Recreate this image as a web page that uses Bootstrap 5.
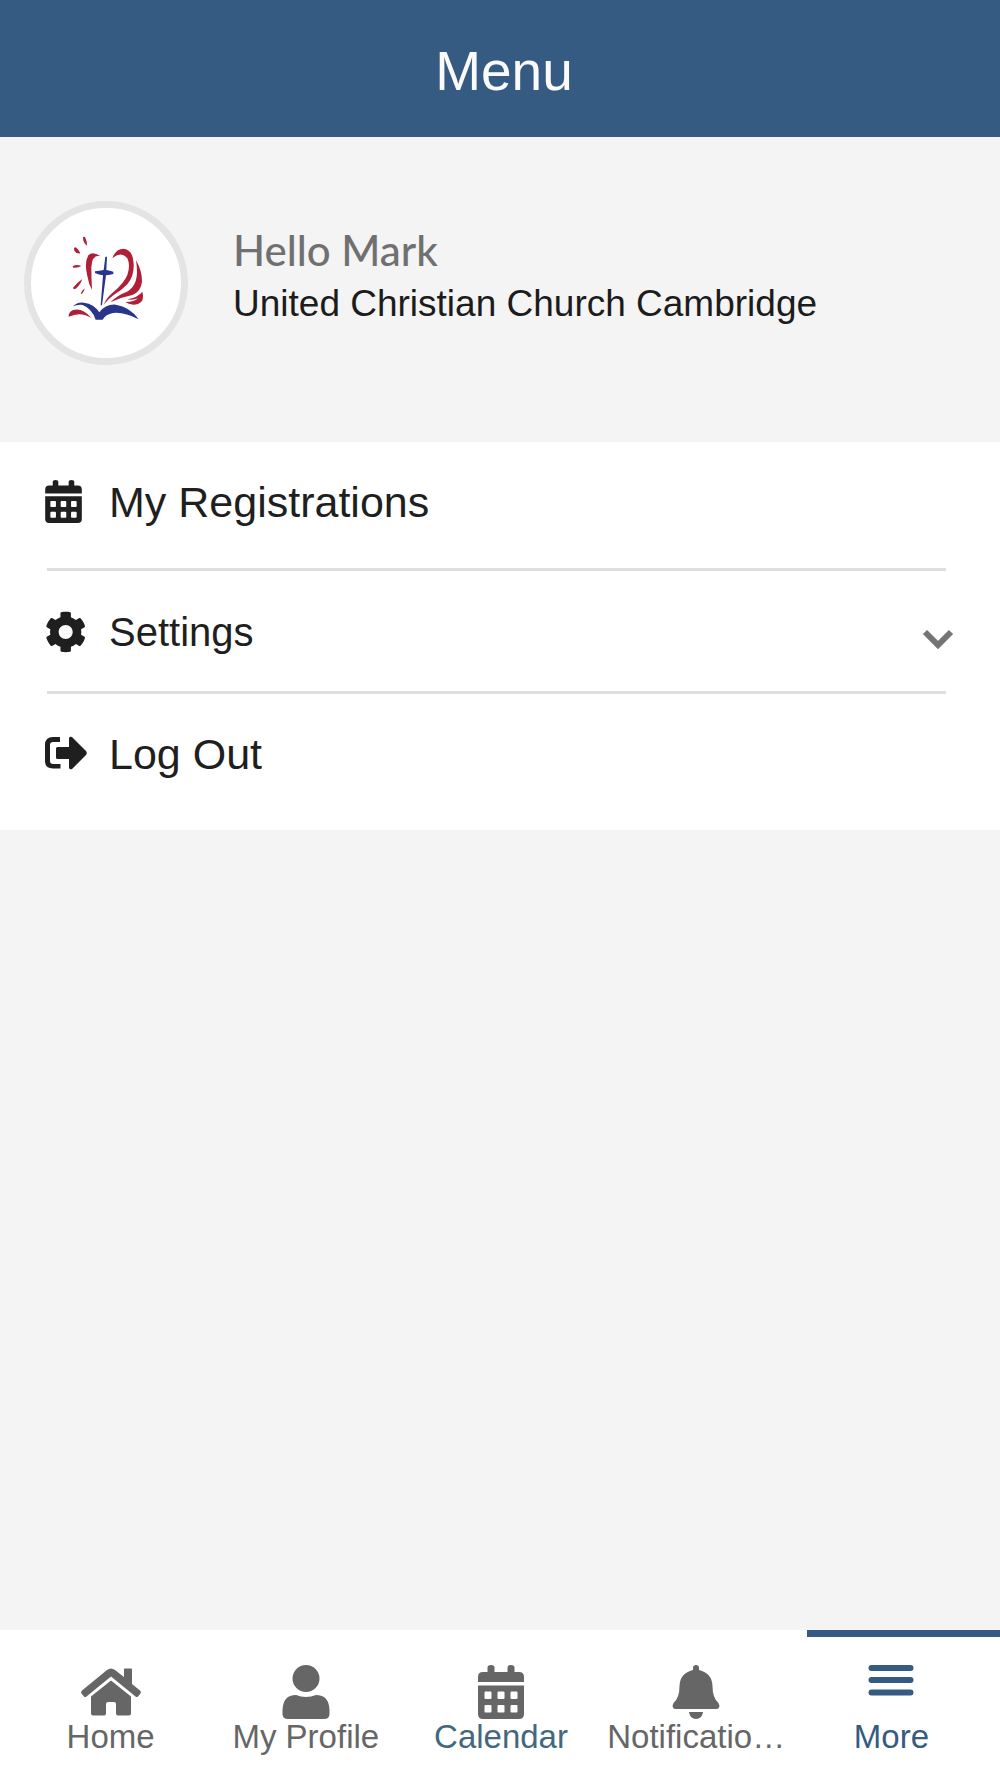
<!DOCTYPE html>
<html lang="en">
<head>
<meta charset="utf-8">
<meta name="viewport" content="width=device-width, initial-scale=1">
<title>Menu</title>
<link href="https://cdn.jsdelivr.net/npm/bootstrap@5.3.0/dist/css/bootstrap.min.css" rel="stylesheet">
<style>
  body { font-family: "Liberation Sans", Arial, sans-serif; background: #f4f4f4; color: #1c1c1c; }
  .app-header { background: #365b82; color: #fafafa; min-height: 137px; padding: 4px 0 0 8px; }
  .app-title { font-size: 55px; line-height: 64px; }
  .profile { padding: 64px 24px 77px; gap: 45px; }
  .avatar { width: 164px; height: 164px; border: 7px solid #e4e4e4; }
  .profile-text { line-height: 54px; padding-bottom: 12px; }
  .greeting { font-family: Lato, sans-serif; font-size: 42px; font-weight: 500; color: #707070; }
  .church { font-size: 37px; }
  .menu-list { padding-bottom: 16px; }
  .menu-item { min-height: 120px; padding: 0 46px 0 44px; gap: 21px; font-size: 43px; line-height: 48px; color: #1f1f1f; }
  .menu-item-sub { font-size: 40px; padding-top: 2px; }
  .menu-icon { width: 44px; height: 44px; }
  .divider { margin: 0 54px 0 47px; height: 3px; background: #dedede; opacity: 1; border: 0; }
  .divider-spaced { margin-top: 6px; }
  .chevron { width: 32px; height: 36px; }
  .tab-bar { padding: 0 11px 0 13px; }
  .tab { flex: 1 1 0; min-width: 0; padding: 35px 0 23px; font-size: 33px; line-height: 36px; color: #666; }
  .tab svg { width: 60px; height: 54px; }
  .tab-calendar { color: #43687c; }
  .tab-calendar svg { color: #666; }
  .tab-active { color: #365b82; }
  .tab-active::before { content: ""; position: absolute; top: 0; left: 13px; right: -11px; height: 7px; background: #365b82; }
</style>
<script src="https://cdn.jsdelivr.net/npm/bootstrap@5.3.0/dist/js/bootstrap.bundle.min.js" defer></script>
</head>
<body class="d-flex flex-column min-vh-100 overflow-x-hidden">

<svg class="d-none" xmlns="http://www.w3.org/2000/svg">
  <symbol id="calendar" viewBox="0 0 46 54">
    <path fill="currentColor" d="M9.500 7V2.500Q9.500 0 13 0T16.500 2.500V7H29.500V2.500Q29.500 0 33 0T36.500 2.500V7H41Q46 7 46 12V17H0V12Q0 7 5 7Z"/>
    <path fill="currentColor" fill-rule="evenodd" d="M0 20.500H46V49Q46 54 41 54H5Q0 54 0 49ZM7.500 26.500Q6.500 26.500 6.500 27.500V33Q6.500 34 7.500 34H12.500Q13.500 34 13.500 33V27.500Q13.500 26.500 12.500 26.500ZM20.500 26.500Q19.500 26.500 19.500 27.500V33Q19.500 34 20.500 34H25.500Q26.500 34 26.500 33V27.500Q26.500 26.500 25.500 26.500ZM33.500 26.500Q32.500 26.500 32.500 27.500V33Q32.500 34 33.500 34H38.500Q39.500 34 39.500 33V27.500Q39.500 26.500 38.500 26.500ZM7.500 40Q6.500 40 6.500 41V46.500Q6.500 47.500 7.500 47.500H12.500Q13.500 47.500 13.500 46.500V41Q13.500 40 12.500 40ZM20.500 40Q19.500 40 19.500 41V46.500Q19.500 47.500 20.500 47.500H25.500Q26.500 47.500 26.500 46.500V41Q26.500 40 25.500 40ZM33.500 40Q32.500 40 32.500 41V46.500Q32.500 47.500 33.500 47.500H38.500Q39.500 47.500 39.500 46.500V41Q39.500 40 38.500 40Z"/>
  </symbol>
</svg>

<header class="app-header d-flex align-items-center justify-content-center">
  <h1 class="app-title fw-normal m-0">Menu</h1>
</header>

<main class="flex-grow-1">
  <section class="profile d-flex align-items-center">
    <div class="avatar rounded-circle bg-white flex-shrink-0">
      <svg class="d-block w-100 h-100" viewBox="48 52 450 450" role="img" aria-label="Church logo">
        <g fill="#b01f38">
          <path d="M204 140Q208 136 211 141Q216 152 216 165Q209 162 205 149Z"/>
          <path d="M177 173Q180 168 184 171Q193 178 196 188Q184 190 178 180Z"/>
          <path d="M173 227Q184 220 199 226Q190 232 175 231Z"/>
          <path d="M202 265Q185 277 174 291Q175 298 182 294Q196 283 202 265Z"/>
          <path d="M209 293Q200 300 197 310Q204 312 209 293Z"/>
          <path d="M256 196Q232 181 220 194Q207 216 217 256Q221 280 231 298Q229 263 229 230Q231 191 256 196Z"/>
          <path d="M292 203Q302 174 326 174Q354 177 356 219Q358 257 337 281Q319 300 297 312Q282 322 266 342Q274 321 296 303Q326 279 337 253Q347 224 337 203Q318 180 292 203Z"/>
          <path d="M363 209Q381 239 381 273Q378 302 352 313Q317 320 286 335Q306 314 336 303Q356 292 363 268Q369 247 363 209Z"/>
          <path d="M382 303Q390 331 369 340Q349 346 331 334Q359 334 369 323Q355 329 337 326Q368 321 382 303Z"/>
          <path d="M161 378Q160 365 174 358Q203 350 229 382Q198 361 161 378Z"/>
        </g>
        <g fill="#29348c">
          <path d="M271 198H276L274 238Q285 240 295 243V250Q285 253 273 254L261 344H257L264 254Q252 252 240 247V242Q253 240 266 238Z"/>
          <path d="M174 347Q187 333 207 336Q237 340 253 365Q272 340 302 342Q345 348 371 386Q327 363 294 367Q272 371 263 387H242Q231 354 203 343Q188 341 174 347Z"/>
        </g>
      </svg>
    </div>
    <div class="profile-text">
      <div class="greeting">Hello Mark</div>
      <div class="church">United Christian Church Cambridge</div>
    </div>
  </section>

  <nav class="menu-list bg-white" aria-label="Account menu">
    <a href="#" class="menu-item d-flex align-items-center text-decoration-none">
      <svg class="menu-icon" viewBox="0 0 44 44" aria-hidden="true"><use href="#calendar" x="1" y="0" width="37" height="43"/></svg>
      <span>My Registrations</span>
    </a>
    <hr class="divider divider-spaced">
    <button type="button" class="menu-item menu-item-sub btn border-0 rounded-0 w-100 d-flex align-items-center text-start" aria-expanded="false">
      <svg class="menu-icon" viewBox="-10 -14 540 540" aria-hidden="true"><path fill="currentColor" d="M487.400 315.700l-42.600-24.600c4.300-23.200 4.300-47 0-70.200l42.600-24.600c4.900-2.800 7.100-8.600 5.500-14-11.100-35.600-30-67.800-54.700-94.600-3.800-4.100-10-5.100-14.800-2.300L380.800 110c-17.900-15.400-38.500-27.300-60.800-35.100V25.800c0-5.600-3.900-10.500-9.400-11.700-36.700-8.200-74.300-7.800-109.200 0-5.500 1.200-9.400 6.100-9.400 11.700V75c-22.200 7.900-42.800 19.800-60.800 35.100L88.700 85.500c-4.900-2.800-11-1.900-14.800 2.300-24.700 26.700-43.600 58.900-54.700 94.600-1.700 5.400.6 11.200 5.500 14L67.300 221c-4.300 23.200-4.300 47 0 70.200l-42.600 24.600c-4.900 2.800-7.100 8.600-5.500 14 11.100 35.600 30 67.800 54.700 94.600 3.800 4.100 10 5.100 14.800 2.300l42.600-24.600c17.900 15.400 38.500 27.300 60.800 35.100v49.200c0 5.600 3.900 10.500 9.400 11.700 36.700 8.200 74.300 7.800 109.200 0 5.500-1.200 9.400-6.100 9.400-11.700v-49.200c22.200-7.900 42.800-19.800 60.800-35.100l42.600 24.600c4.900 2.800 11 1.900 14.800-2.300 24.700-26.700 43.600-58.900 54.700-94.600 1.500-5.500-.7-11.300-5.600-14.100zM256 342c-47 0-86-39-86-86s39-86 86-86 86 39 86 86-39 86-86 86z"/></svg>
      <span class="flex-grow-1">Settings</span>
      <svg class="chevron" viewBox="0 0 32 36" aria-hidden="true"><path d="M3 18L16 31L29 18" fill="none" stroke="#747474" stroke-width="6"/></svg>
    </button>
    <hr class="divider">
    <a href="#" class="menu-item d-flex align-items-center text-decoration-none">
      <svg class="menu-icon" viewBox="0 0 44 44" aria-hidden="true">
        <path fill="currentColor" d="M16 5.500V10H9Q6 10 6 13V29Q6 32 9 32H16.500V36.500H9Q1 36.500 1 29V13Q1 5 9 5H15.500Z"/>
        <path fill="currentColor" d="M13.500 15H25V6Q26 4 28 5L42 19Q43.500 21 42 23L28 37Q26 38 25 36V27H13.500Q12 27 12 25.500V16.500Q12 15 13.500 15Z"/>
      </svg>
      <span>Log Out</span>
    </a>
  </nav>
</main>

<nav class="tab-bar bg-white d-flex text-center text-nowrap" aria-label="Main">
  <a href="#" class="tab d-flex flex-column align-items-center text-decoration-none">
    <svg viewBox="0 0 60 54" aria-hidden="true"><g fill="currentColor">
      <path d="M26 5Q30 2 34 5L43 12V4Q43 3.500 44 3.500H50Q51 3.500 51 4.500V19L59 25.500Q60.500 27 59.500 28.500L57 31.500Q56 32.500 54.500 31.500L30 11.500L5.500 31.500Q4 32.500 3 31.500L.5 28.500Q-.5 27 1 25.500Z"/>
      <path d="M30 15.500L50 31.500V48.500Q50 50.500 48 50.500H37Q35 50.500 35 48.500V39Q35 37 33 37H27Q25 37 25 39V48.500Q25 50.500 23 50.500H12Q10 50.500 10 48.500V31.500Z"/></g></svg>
    <span>Home</span>
  </a>
  <a href="#" class="tab d-flex flex-column align-items-center text-decoration-none">
    <svg viewBox="0 0 60 54" aria-hidden="true"><g fill="currentColor"><circle cx="30" cy="13.500" r="13.500"/>
      <path d="M20 30Q30 34 40 30Q53 30 53.500 45V49Q53.500 54 48 54H12Q6.500 54 6.500 49V45Q7 30 20 30Z"/></g></svg>
    <span>My Profile</span>
  </a>
  <a href="#" class="tab tab-calendar d-flex flex-column align-items-center text-decoration-none">
    <svg viewBox="0 0 60 54" aria-hidden="true"><use href="#calendar" x="7" y="0" width="46" height="54"/></svg>
    <span>Calendar</span>
  </a>
  <a href="#" class="tab d-flex flex-column align-items-center text-decoration-none">
    <svg viewBox="0 0 60 54" aria-hidden="true"><g fill="currentColor">
      <path d="M27 5V3Q27 0 30 0T33 3V5Q46 8 46.500 21Q46.500 33 52.500 38Q54 41 53 42.500Q52.500 44 50 44H10Q7.500 44 7 42.500Q6 41 7.500 38Q13.500 33 13.500 21Q14 8 27 5Z"/>
      <path d="M23 47H37Q36 54 30 54T23 47Z"/></g></svg>
    <span>Notificatio…</span>
  </a>
  <a href="#" class="tab tab-active position-relative d-flex flex-column align-items-center text-decoration-none" aria-current="page">
    <svg viewBox="0 0 60 54" aria-hidden="true"><path d="M10.500 3H49.500M10.500 15H49.500M10.500 27.500H49.500" fill="none" stroke="currentColor" stroke-width="6" stroke-linecap="round"/></svg>
    <span>More</span>
  </a>
</nav>
</body>
</html>
